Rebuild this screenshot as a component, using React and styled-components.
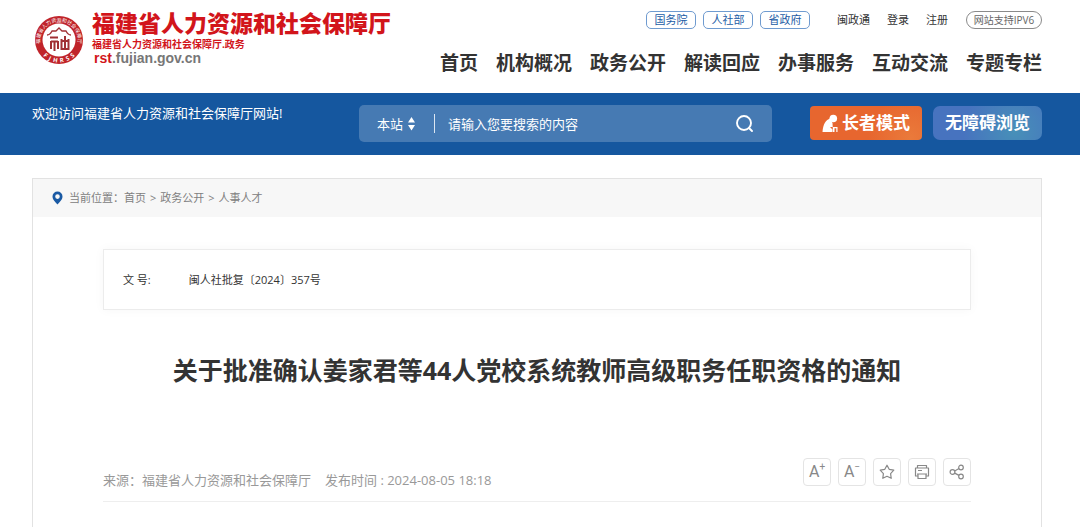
import React from 'react';
import styled, { createGlobalStyle } from 'styled-components';

const GlobalStyle = createGlobalStyle`
  * { box-sizing: border-box; }
  body {
    margin: 0;
    background: #fff;
    color: #333;
    font-family: "Open Sans", "Noto Sans CJK SC", sans-serif;
    font-size: 13px;
    line-height: 20px;
  }
  a { color: inherit; text-decoration: none; }
  button, input, select { font: inherit; }
  h1, p { margin: 0; }
`;

const Header = styled.header`
  display: flex;
  justify-content: space-between;
  padding: 10px 38px 0 34px;
  height: 93px;
`;

const Brand = styled.a`
  display: flex;
  align-items: flex-start;
  gap: 8px;
  white-space: nowrap;
`;

const Seal = styled.svg`
  width: 50px;
  height: 50px;
  margin-top: 5px;
`;

const BrandText = styled.span`
  display: flex;
  flex-direction: column;
  color: #d2151b;
`;

const BrandName = styled.span`
  font-size: 23px;
  font-weight: 900;
  line-height: 27px;
`;

const BrandSub = styled.span`
  font-size: 10px;
  font-weight: 700;
  line-height: 14px;
`;

const BrandUrl = styled.span`
  padding-left: 2px;
  font-family: "Liberation Sans", sans-serif;
  font-size: 14px;
  font-weight: 700;
  line-height: 14px;
  color: #777;
`;

const Red = styled.span`
  color: #d2151b;
`;

const HeaderRight = styled.div`
  display: flex;
  flex-direction: column;
  align-items: flex-end;
  gap: 20px;
  padding-top: 1px;
  white-space: nowrap;
`;

const TopLinks = styled.div`
  display: flex;
  align-items: center;
  font-size: 11px;
  line-height: 18px;
`;

const Pills = styled.div`
  display: flex;
  gap: 7px;
  margin-right: 27px;
`;

const Pill = styled.a`
  display: flex;
  align-items: center;
  justify-content: center;
  width: 50px;
  height: 18px;
  border: 1px solid #6f9bd0;
  border-radius: 5px;
  color: #1c5ca5;
`;

const Account = styled.div`
  display: flex;
  gap: 17px;
  margin-right: 18px;
`;

const Ipv6 = styled.span`
  display: flex;
  align-items: center;
  justify-content: center;
  width: 76px;
  height: 18px;
  border: 1px solid #8a8a8a;
  border-radius: 9px;
  font-size: 10px;
  color: #666;
`;

const Nav = styled.nav`
  display: flex;
  gap: 18px;
  font-size: 19px;
  font-weight: 700;
  line-height: 28px;
`;

const Banner = styled.section`
  display: flex;
  align-items: flex-start;
  padding: 12px 38px 0 32px;
  height: 62px;
  background: #15579f;
  color: #fff;
  white-space: nowrap;
`;

const Welcome = styled.p`
  flex: 0 0 327px;
  line-height: 16px;
`;

const Search = styled.form`
  display: flex;
  align-items: center;
  flex: 1;
  min-width: 0;
  height: 37px;
  padding: 0 18px;
  border-radius: 5px;
  background: #467ab3;
`;

const Scope = styled.label`
  display: flex;
  align-items: center;
  gap: 5px;
  padding-right: 19px;
`;

const ScopeSelect = styled.select`
  appearance: none;
  width: 26px;
  padding: 0;
  border: 0;
  background: transparent;
  color: #fff;
  outline: none;
`;

const Divider = styled.span`
  width: 1px;
  height: 19px;
  margin-right: 13px;
  background: #dbe6f2;
`;

const SearchInput = styled.input`
  flex: 1;
  min-width: 0;
  padding: 0;
  border: 0;
  background: transparent;
  color: #fff;
  outline: none;
  &::placeholder { color: #fff; opacity: 1; }
`;

const SearchButton = styled.button`
  display: flex;
  padding: 0;
  border: 0;
  background: transparent;
`;

const ModeButton = styled.button`
  display: flex;
  align-items: center;
  justify-content: center;
  gap: 3px;
  width: ${(p) => p.$width};
  height: 34px;
  margin: 1px 0 0 ${(p) => p.$gap};
  padding: 0;
  border: 0;
  border-radius: ${(p) => p.$radius};
  background: ${(p) => p.$fill};
  color: #fff;
  font-size: 17px;
  font-weight: 700;
`;

const Panel = styled.main`
  margin: 23px 38px 0 32px;
  border: 1px solid #e2e2e2;
  border-bottom: 0;
`;

const Breadcrumb = styled.nav`
  display: flex;
  align-items: center;
  gap: 4px;
  height: 38px;
  padding-left: 19px;
  background: #f7f7f7;
  color: #808080;
  font-size: 11px;
`;

const Pin = styled.svg`
  width: 11px;
  height: 14px;
  margin-right: 2px;
`;

const Article = styled.article`
  padding: 32px 70px 26px;
`;

const DocInfo = styled.dl`
  display: flex;
  align-items: center;
  gap: 38px;
  height: 61px;
  margin: 0;
  padding: 0 19px;
  border: 1px solid #ececec;
  box-shadow: 0 0 10px rgba(0, 0, 0, 0.04);
  font-size: 11px;
  dd { margin: 0; }
`;

const Title = styled.h1`
  padding: 42px 0 70px;
  font-size: 25px;
  font-weight: 700;
  line-height: 36px;
  text-align: center;
`;

const Meta = styled.div`
  display: flex;
  align-items: flex-end;
  gap: 14px;
  height: 44px;
  padding-bottom: 11px;
  border-bottom: 1px solid #eee;
  color: #999;
  white-space: nowrap;
`;

const Tools = styled.div`
  display: flex;
  align-self: flex-start;
  gap: 7px;
  margin-left: auto;
`;

const ToolButton = styled.button`
  display: flex;
  align-items: center;
  justify-content: center;
  width: 28px;
  height: 28px;
  padding: 0;
  border: 1px solid #e4e4e4;
  border-radius: 4px;
  background: #fff;
  color: #888;
  font-family: Roboto, sans-serif;
  font-size: 16px;
  font-weight: 400;
  sup { align-self: flex-start; font-size: 10px; line-height: 16px; }
`;

const navItems = ['首页', '机构概况', '政务公开', '解读回应', '办事服务', '互动交流', '专题专栏'];

function SealLogo() {
  return (
    <Seal viewBox="0 0 50 50" aria-hidden="true">
      <defs>
        <path id="upper-arc" d="M6.500 30 A19 19 0 1 1 43.500 30" />
        <path id="lower-arc" d="M2.500 25 A22.500 22.500 0 0 0 47.500 25" />
      </defs>
      <circle cx="25" cy="25" r="24" fill="#c0242a" />
      <circle cx="25" cy="25" r="16.500" fill="#fff" />
      <text fill="#fff" fontSize="5" textAnchor="middle">
        <textPath href="#upper-arc" startOffset="50%">福建省人力资源和社会保障厅</textPath>
      </text>
      <text fill="#fff" fontSize="6" fontWeight="700" textAnchor="middle">
        <textPath href="#lower-arc" startOffset="50%">{'F\u2002J\u2002H\u2002R\u2002S\u2002S'}</textPath>
      </text>
      <g fill="none" stroke="#a03034">
        <path strokeWidth="1.300" d="M13 20 Q16 20 18 16 H22 L25 13 L28 16 H32 Q34 20 37 20" />
        <path strokeWidth="2" d="M16 22.500 H24 M17 26.500 H24 M17 26 V34 M20.500 26 V36 M24 26 V34" />
        <path strokeWidth="2" d="M27.500 24 V35 M34.500 24 V35 M27 34 H35 M27 26 H35 M31 21 V34" />
      </g>
    </Seal>
  );
}

export default function App() {
  return (
    <>
      <GlobalStyle />
      <Header>
        <Brand href="#">
          <SealLogo />
          <BrandText>
            <BrandName>福建省人力资源和社会保障厅</BrandName>
            <BrandSub>福建省人力资源和社会保障厅.政务</BrandSub>
            <BrandUrl><Red>rst</Red>.fujian.gov.cn</BrandUrl>
          </BrandText>
        </Brand>
        <HeaderRight>
          <TopLinks>
            <Pills>
              <Pill href="#">国务院</Pill>
              <Pill href="#">人社部</Pill>
              <Pill href="#">省政府</Pill>
            </Pills>
            <Account>
              <a href="#">闽政通</a>
              <a href="#">登录</a>
              <a href="#">注册</a>
            </Account>
            <Ipv6>网站支持IPV6</Ipv6>
          </TopLinks>
          <Nav>
            {navItems.map((item) => <a href="#" key={item}>{item}</a>)}
          </Nav>
        </HeaderRight>
      </Header>

      <Banner>
        <Welcome>欢迎访问福建省人力资源和社会保障厅网站!</Welcome>
        <Search onSubmit={(e) => e.preventDefault()}>
          <Scope>
            <ScopeSelect aria-label="搜索范围"><option>本站</option></ScopeSelect>
            <svg width="7" height="14" viewBox="0 0 7 14" fill="#fff" aria-hidden="true">
              <path d="M3.500 0 L7 5.500 H0 Z M0 8 H7 L3.500 13.500 Z" />
            </svg>
          </Scope>
          <Divider />
          <SearchInput aria-label="搜索" placeholder="请输入您要搜索的内容" />
          <SearchButton aria-label="搜索">
            <svg width="19" height="19" viewBox="0 0 19 19" fill="none" stroke="#fff" strokeWidth="1.900" strokeLinecap="round">
              <circle cx="9" cy="9" r="7" />
              <path d="M14 14 L17 17" />
            </svg>
          </SearchButton>
        </Search>
        <ModeButton $width="112px" $gap="38px" $radius="4px" $fill="radial-gradient(circle at 90% 95%, #ea7a3b, #e7662f 40%)">
          <svg width="17" height="18" viewBox="0 0 17 18" fill="#fff" aria-hidden="true">
            <circle cx="11.300" cy="4.500" r="3.800" />
            <path d="M8 4.500 C4 6 1 10 0.500 18 H10.500 V15.500 L8 13 H15.500 V18 H14.300 V14.300 H12.500 V18 H11 L10.500 9 Z" />
          </svg>
          长者模式
        </ModeButton>
        <ModeButton $width="109px" $gap="11px" $radius="7px" $fill="radial-gradient(circle at 75% 75%, #4790b8, #4773bf 60%)">
          无障碍浏览
        </ModeButton>
      </Banner>

      <Panel>
        <Breadcrumb aria-label="当前位置">
          <Pin viewBox="0 0 11 14" aria-hidden="true">
            <path fill="#1a5aa4" fillRule="evenodd" d="M5.500 0.500 A5 5 0 0 0 0.500 5.500 C0.500 9 4 11.500 5.500 13.500 C7 11.500 10.500 9 10.500 5.500 A5 5 0 0 0 5.500 0.500 Z M5.500 3.300 A2.300 2.300 0 1 1 5.500 7.900 A2.300 2.300 0 1 1 5.500 3.300 Z" />
          </Pin>
          <span>当前位置：<a href="#">首页</a></span>
          <span>&gt;</span>
          <a href="#">政务公开</a>
          <span>&gt;</span>
          <a href="#">人事人才</a>
        </Breadcrumb>
        <Article>
          <DocInfo>
            <dt>文 号:</dt>
            <dd>闽人社批复〔2024〕357号</dd>
          </DocInfo>
          <Title>关于批准确认姜家君等44人党校系统教师高级职务任职资格的通知</Title>
          <Meta>
            <span>来源：福建省人力资源和社会保障厅</span>
            <span>发布时间 : 2024-08-05 18:18</span>
            <Tools>
              <ToolButton aria-label="放大字体">A<sup>+</sup></ToolButton>
              <ToolButton aria-label="缩小字体">A<sup>−</sup></ToolButton>
              <ToolButton aria-label="收藏">
                <svg width="16" height="16" viewBox="0 0 16 16" fill="none" stroke="#888" strokeWidth="1.200" strokeLinejoin="round">
                  <path d="M8 1.200 L10.200 5.300 L14.800 6.200 L11.600 9.600 L12.200 14.300 L8 12.300 L3.800 14.300 L4.400 9.600 L1.200 6.200 L5.800 5.300 Z" />
                </svg>
              </ToolButton>
              <ToolButton aria-label="打印">
                <svg width="16" height="16" viewBox="0 0 16 16" fill="none" stroke="#888" strokeWidth="1.200" strokeLinejoin="round">
                  <path d="M3.500 4 V1.500 H12.500 V4 M4 12 H1.500 V4 H14.500 V12 H12 M4 6.500 H8 M3 10 H13 M4 10 V14.500 H12 V10" />
                </svg>
              </ToolButton>
              <ToolButton aria-label="分享">
                <svg width="16" height="16" viewBox="0 0 16 16" fill="none" stroke="#888" strokeWidth="1.200">
                  <circle cx="3.500" cy="8" r="2.400" />
                  <circle cx="12" cy="3.500" r="2.300" />
                  <circle cx="12" cy="12.500" r="2.300" />
                  <path d="M5.700 7 L10 4.600 M5.700 9.100 L10 11.400" />
                </svg>
              </ToolButton>
            </Tools>
          </Meta>
        </Article>
      </Panel>
    </>
  );
}
